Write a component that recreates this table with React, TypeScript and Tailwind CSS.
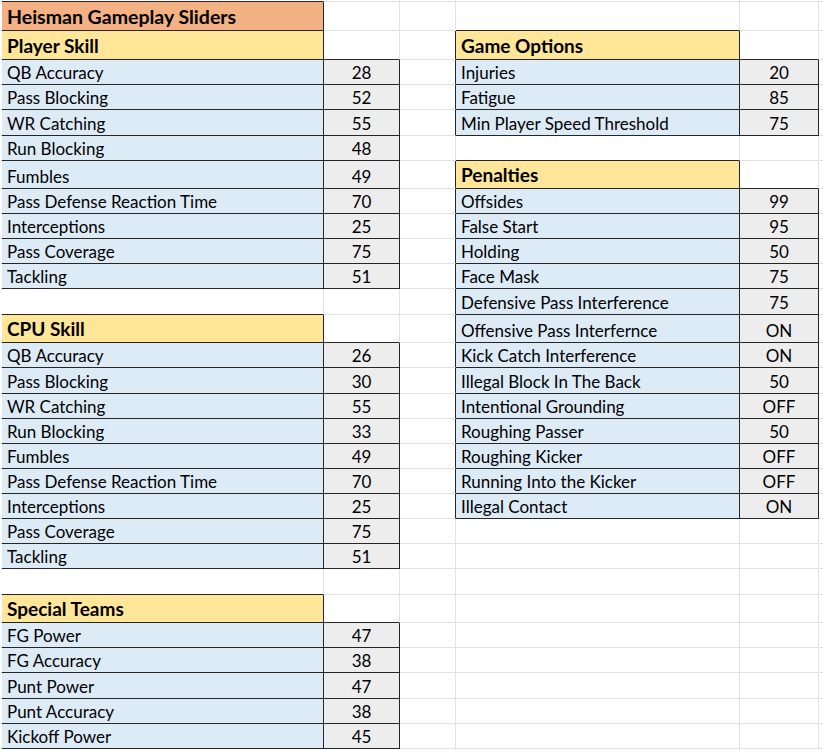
type Kind = 'none' | 'title' | 'header' | 'label' | 'value'
type Cell = { kind: Kind; text?: string }

const playerSkill: [string, string][] = [
  ['QB Accuracy', '28'],
  ['Pass Blocking', '52'],
  ['WR Catching', '55'],
  ['Run Blocking', '48'],
  ['Fumbles', '49'],
  ['Pass Defense Reaction Time', '70'],
  ['Interceptions', '25'],
  ['Pass Coverage', '75'],
  ['Tackling', '51'],
]

const cpuSkill: [string, string][] = [
  ['QB Accuracy', '26'],
  ['Pass Blocking', '30'],
  ['WR Catching', '55'],
  ['Run Blocking', '33'],
  ['Fumbles', '49'],
  ['Pass Defense Reaction Time', '70'],
  ['Interceptions', '25'],
  ['Pass Coverage', '75'],
  ['Tackling', '51'],
]

const specialTeams: [string, string][] = [
  ['FG Power', '47'],
  ['FG Accuracy', '38'],
  ['Punt Power', '47'],
  ['Punt Accuracy', '38'],
  ['Kickoff Power', '45'],
]

const gameOptions: [string, string][] = [
  ['Injuries', '20'],
  ['Fatigue', '85'],
  ['Min Player Speed Threshold', '75'],
]

const penalties: [string, string][] = [
  ['Offsides', '99'],
  ['False Start', '95'],
  ['Holding', '50'],
  ['Face Mask', '75'],
  ['Defensive Pass Interference', '75'],
  ['Offensive Pass Interfernce', 'ON'],
  ['Kick Catch Interference', 'ON'],
  ['Illegal Block In The Back', '50'],
  ['Intentional Grounding', 'OFF'],
  ['Roughing Passer', '50'],
  ['Roughing Kicker', 'OFF'],
  ['Running Into the Kicker', 'OFF'],
  ['Illegal Contact', 'ON'],
]

const blank: Cell[] = [{ kind: 'none' }, { kind: 'none' }]
const pair = ([l, v]: [string, string]): Cell[] => [
  { kind: 'label', text: l },
  { kind: 'value', text: v },
]
const head = (t: string): Cell[] => [{ kind: 'header', text: t }, { kind: 'none' }]

const leftCols: Cell[][] = [
  [{ kind: 'title', text: 'Heisman Gameplay Sliders' }, { kind: 'none' }],
  head('Player Skill'),
  ...playerSkill.map(pair),
  blank,
  head('CPU Skill'),
  ...cpuSkill.map(pair),
  blank,
  head('Special Teams'),
  ...specialTeams.map(pair),
]

const rightCols: Cell[][] = [
  blank,
  head('Game Options'),
  ...gameOptions.map(pair),
  blank,
  head('Penalties'),
  ...penalties.map(pair),
]

const ROWS = 31
const COLS = 7

// row 0 and col 0 are thin lead-in strips, last row / col are trailing empties
function buildGrid(): Cell[][] {
  const grid: Cell[][] = []
  for (let r = 0; r < ROWS; r++) {
    const row: Cell[] = []
    for (let c = 0; c < COLS; c++) row.push({ kind: 'none' })
    grid.push(row)
  }
  leftCols.forEach((cells, i) => {
    grid[i + 1][1] = cells[0]
    grid[i + 1][2] = cells[1]
  })
  rightCols.forEach((cells, i) => {
    grid[i + 1][4] = cells[0]
    grid[i + 1][5] = cells[1]
  })
  return grid
}

const fills: Record<Kind, string> = {
  none: 'bg-white',
  title: 'bg-[#f4b183]',
  header: 'bg-[#ffe699]',
  label: 'bg-[#ddebf7]',
  value: 'bg-[#ededed]',
}

const sizes: Record<Kind, string> = {
  none: 'text-[17px] leading-[22px]',
  title: 'text-[19.5px] font-bold leading-[26px]',
  header: 'text-[19px] font-bold leading-[26px]',
  label: 'text-[17px] leading-[22px]',
  value: 'text-[17px] leading-[22px]',
}

export default function App() {
  const grid = buildGrid()
  const boxed = (r: number, c: number) =>
    r < ROWS && c < COLS && grid[r][c].kind !== 'none'

  return (
    <div
      className="w-[823px] h-[750px] overflow-hidden bg-white text-black"
      style={{ fontFamily: 'Lato, "Open Sans", sans-serif' }}
    >
      <div className="grid grid-cols-[2px_322px_76px_56px_284px_79px_1fr] grid-rows-[2px_29px_29px_25px_25px_26px_25px_28px_25px_25px_25px_25px_26px_28px_25px_26px_25px_25px_25px_25px_25px_25px_25px_26px_28px_25px_25px_26px_25px_25px_25px]">
        {grid.map((row, r) =>
          row.map((cell, c) => {
            const darkR = boxed(r, c) || boxed(r, c + 1)
            const darkB = boxed(r, c) || boxed(r + 1, c)
            return (
              <div
                key={`${r}-${c}`}
                className={`flex items-end overflow-hidden whitespace-nowrap border-r border-b ${
                  darkR ? 'border-r-[#262626]' : 'border-r-[#e2e2e2]'
                } ${darkB ? 'border-b-[#262626]' : 'border-b-[#e2e2e2]'} ${fills[cell.kind]} ${
                  cell.kind === 'value' ? 'justify-center' : 'pl-[5px]'
                } ${sizes[cell.kind]}`}
              >
                {cell.text}
              </div>
            )
          })
        )}
      </div>
    </div>
  )
}
